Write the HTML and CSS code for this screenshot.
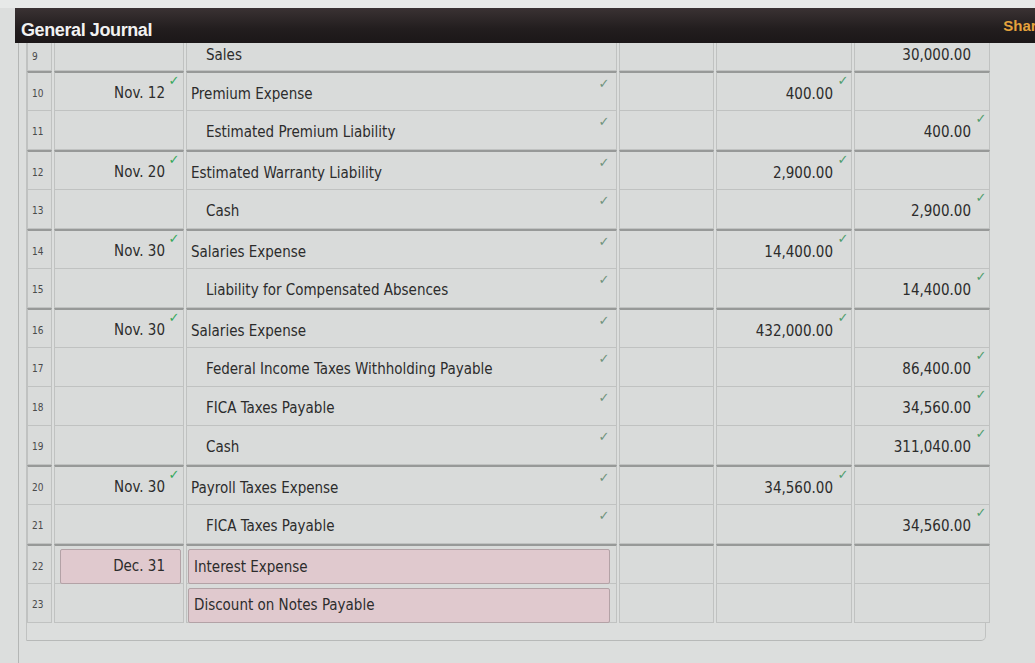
FILE: index.html
```html
<!DOCTYPE html>
<html>
<head>
<meta charset="utf-8">
<link rel="stylesheet" href="styles.css">
</head>
<body>
<div class="topstrip"></div>
<div class="header">
  <span class="title">General Journal</span>
  <span class="share">Share</span>
</div>
<div class="sheet">
  <div class="box">
    <div class="journal">
      <!-- row 9 -->
      <div class="cell num short">9</div>
      <div class="cell date short"></div>
      <div class="cell acct cr short"><span>Sales</span></div>
      <div class="cell post short"></div>
      <div class="cell amt short"></div>
      <div class="cell amt short"><span>30,000.00</span><i class="ck none"></i></div>

      <!-- row 10 -->
      <div class="cell num g">10</div>
      <div class="cell date g"><span>Nov. 12</span><i class="ck green">✓</i></div>
      <div class="cell acct g"><span>Premium Expense</span><i class="ck grey">✓</i></div>
      <div class="cell post g"></div>
      <div class="cell amt g"><span>400.00</span><i class="ck">✓</i></div>
      <div class="cell amt g"></div>

      <!-- row 11 -->
      <div class="cell num">11</div>
      <div class="cell date"></div>
      <div class="cell acct cr"><span>Estimated Premium Liability</span><i class="ck grey">✓</i></div>
      <div class="cell post"></div>
      <div class="cell amt"></div>
      <div class="cell amt"><span>400.00</span><i class="ck">✓</i></div>

      <!-- row 12 -->
      <div class="cell num g">12</div>
      <div class="cell date g"><span>Nov. 20</span><i class="ck green">✓</i></div>
      <div class="cell acct g"><span>Estimated Warranty Liability</span><i class="ck grey">✓</i></div>
      <div class="cell post g"></div>
      <div class="cell amt g"><span>2,900.00</span><i class="ck">✓</i></div>
      <div class="cell amt g"></div>

      <!-- row 13 -->
      <div class="cell num">13</div>
      <div class="cell date"></div>
      <div class="cell acct cr"><span>Cash</span><i class="ck grey">✓</i></div>
      <div class="cell post"></div>
      <div class="cell amt"></div>
      <div class="cell amt"><span>2,900.00</span><i class="ck">✓</i></div>

      <!-- row 14 -->
      <div class="cell num g">14</div>
      <div class="cell date g"><span>Nov. 30</span><i class="ck green">✓</i></div>
      <div class="cell acct g"><span>Salaries Expense</span><i class="ck grey">✓</i></div>
      <div class="cell post g"></div>
      <div class="cell amt g"><span>14,400.00</span><i class="ck">✓</i></div>
      <div class="cell amt g"></div>

      <!-- row 15 -->
      <div class="cell num">15</div>
      <div class="cell date"></div>
      <div class="cell acct cr"><span>Liability for Compensated Absences</span><i class="ck grey">✓</i></div>
      <div class="cell post"></div>
      <div class="cell amt"></div>
      <div class="cell amt"><span>14,400.00</span><i class="ck">✓</i></div>

      <!-- row 16 -->
      <div class="cell num g">16</div>
      <div class="cell date g"><span>Nov. 30</span><i class="ck green">✓</i></div>
      <div class="cell acct g"><span>Salaries Expense</span><i class="ck grey">✓</i></div>
      <div class="cell post g"></div>
      <div class="cell amt g"><span>432,000.00</span><i class="ck">✓</i></div>
      <div class="cell amt g"></div>

      <!-- row 17 -->
      <div class="cell num">17</div>
      <div class="cell date"></div>
      <div class="cell acct cr"><span>Federal Income Taxes Withholding Payable</span><i class="ck grey">✓</i></div>
      <div class="cell post"></div>
      <div class="cell amt"></div>
      <div class="cell amt"><span>86,400.00</span><i class="ck">✓</i></div>

      <!-- row 18 -->
      <div class="cell num">18</div>
      <div class="cell date"></div>
      <div class="cell acct cr"><span>FICA Taxes Payable</span><i class="ck grey">✓</i></div>
      <div class="cell post"></div>
      <div class="cell amt"></div>
      <div class="cell amt"><span>34,560.00</span><i class="ck">✓</i></div>

      <!-- row 19 -->
      <div class="cell num">19</div>
      <div class="cell date"></div>
      <div class="cell acct cr"><span>Cash</span><i class="ck grey">✓</i></div>
      <div class="cell post"></div>
      <div class="cell amt"></div>
      <div class="cell amt"><span>311,040.00</span><i class="ck">✓</i></div>

      <!-- row 20 -->
      <div class="cell num g">20</div>
      <div class="cell date g"><span>Nov. 30</span><i class="ck green">✓</i></div>
      <div class="cell acct g"><span>Payroll Taxes Expense</span><i class="ck grey">✓</i></div>
      <div class="cell post g"></div>
      <div class="cell amt g"><span>34,560.00</span><i class="ck">✓</i></div>
      <div class="cell amt g"></div>

      <!-- row 21 -->
      <div class="cell num">21</div>
      <div class="cell date"></div>
      <div class="cell acct cr"><span>FICA Taxes Payable</span><i class="ck grey">✓</i></div>
      <div class="cell post"></div>
      <div class="cell amt"></div>
      <div class="cell amt"><span>34,560.00</span><i class="ck">✓</i></div>

      <!-- row 22 -->
      <div class="cell num g">22</div>
      <div class="cell date g"><span class="input date-in">Dec. 31</span></div>
      <div class="cell acct g"><span class="input acct-in">Interest Expense</span></div>
      <div class="cell post g"></div>
      <div class="cell amt g"></div>
      <div class="cell amt g"></div>

      <!-- row 23 -->
      <div class="cell num">23</div>
      <div class="cell date"></div>
      <div class="cell acct"><span class="input acct-in">Discount on Notes Payable</span></div>
      <div class="cell post"></div>
      <div class="cell amt"></div>
      <div class="cell amt"></div>
    </div>
  </div>
</div>
</body>
</html>
```

FILE: styles.css
```css
html, body {
  margin: 0;
  padding: 0;
}
body {
  width: 1035px;
  height: 663px;
  overflow: hidden;
  background: #dcdedd;
  font-family: "DejaVu Sans Condensed", "Liberation Sans", sans-serif;
  color: #2c2c2c;
}
.topstrip {
  height: 8px;
  background: #e7e9e8;
}
.header {
  margin-left: 15px;
  height: 35px;
  background: linear-gradient(#3a3233, #221d1e 60%, #1b1718);
  display: flex;
  justify-content: space-between;
  align-items: center;
  padding: 2px 0 0 6px;
  box-sizing: border-box;
  overflow: hidden;
}
.title {
  font-family: "Liberation Sans", Arial, sans-serif;
  font-weight: bold;
  font-size: 18px;
  color: #f1f1f1;
  letter-spacing: -0.4px;
  margin-top: 8px;
}
.share {
  font-family: "Liberation Sans", Arial, sans-serif;
  font-weight: bold;
  font-size: 15px;
  color: #e6a33c;
  margin-right: -10px;
  margin-top: -2px;
}
.sheet {
  margin-left: 18px;
  border-left: 1px solid #b4b6b5;
  padding-left: 7px;
  height: 620px;
}
.box {
  width: 958px;
  height: 597px;
  border-right: 1px solid #c0c2c1;
  border-bottom: 1px solid #b7b9b8;
  border-bottom-right-radius: 5px;
  border-left: 1px solid #c0c2c1;
}
.journal {
  display: grid;
  grid-template-columns: 25px 130px 431px 95px 136px 136px;
  column-gap: 2px;
  width: 963px;
}
.cell {
  height: 39px;
  border-bottom: 1px solid #c0c2c1;
  border-left: 1px solid #c0c2c1;
  border-right: 1px solid #c0c2c1;
  display: flex;
  align-items: center;
  box-sizing: border-box;
  font-size: 15px;
  background: #d9dbda;
}
.cell.short {
  height: 28px;
  padding-top: 0;
}
.cell.short > span {
  margin-top: -3px;
}
.cell.g {
  border-top: 2px solid #979998;
  height: 40px;
}
.num {
  font-size: 10px;
  color: #4a4a4a;
  padding-left: 4px;
  padding-top: 3px;
}
.date {
  justify-content: flex-end;
  padding-right: 3px;
}
.date > span {
  margin-top: 3px;
}
.acct {
  justify-content: space-between;
  padding-left: 4px;
  padding-right: 6px;
}
.acct > span {
  margin-top: 4px;
}
.acct.cr {
  padding-left: 19px;
}
.amt {
  justify-content: flex-end;
  padding-right: 2px;
}
.amt > span {
  margin-top: 4px;
}
.ck {
  font-style: normal;
  font-family: "DejaVu Sans", sans-serif;
  font-size: 13px;
  color: #4f9d6c;
  align-self: flex-start;
  margin-top: 0;
  width: 12px;
  margin-left: 4px;
  text-align: center;
}
.ck.green {
  color: #35a85a;
  margin-left: 3px;
}
.ck.grey {
  color: #6f937c;
  margin-top: 3px;
}
.ck.none {
  visibility: hidden;
}
.input {
  display: flex;
  align-items: center;
  box-sizing: border-box;
  height: 35px;
  background: #e0c9ce;
  border: 1px solid #b3a2a6;
  border-radius: 2px;
  margin-top: 1px;
}
.date-in {
  width: 121px;
  justify-content: flex-end;
  padding-right: 15px;
  margin-right: -1px;
}
.acct-in {
  width: 431px;
  padding-left: 5px;
  margin-left: -3px;
}
```
